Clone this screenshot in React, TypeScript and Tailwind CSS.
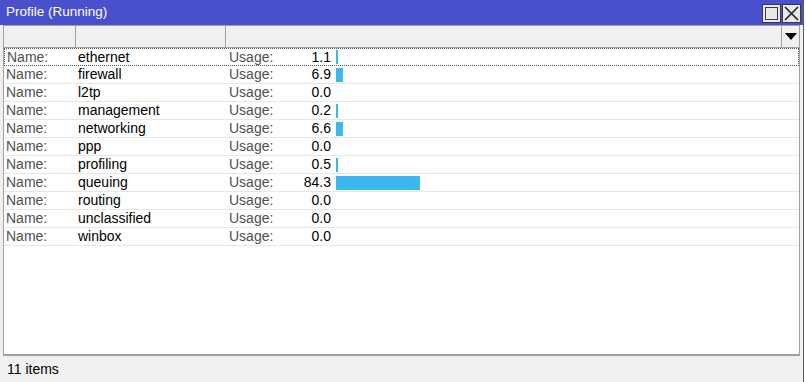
import React from "react";

const rows = [
  { name: "ethernet", usage: 1.1 },
  { name: "firewall", usage: 6.9 },
  { name: "l2tp", usage: 0.0 },
  { name: "management", usage: 0.2 },
  { name: "networking", usage: 6.6 },
  { name: "ppp", usage: 0.0 },
  { name: "profiling", usage: 0.5 },
  { name: "queuing", usage: 84.3 },
  { name: "routing", usage: 0.0 },
  { name: "unclassified", usage: 0.0 },
  { name: "winbox", usage: 0.0 },
];

const App = () => {
  return (
    <div
      className="w-[807px] h-[382px] bg-white overflow-hidden"
      style={{ fontFamily: '"Liberation Sans", Arial, sans-serif' }}
    >
      <div className="w-[804px] h-[382px] flex flex-col bg-[#f0f0f0] border-r border-[#5a5a5a]">
        <div className="h-[25px] bg-[#4a4fcc] flex items-center justify-between pl-[6px] pr-[2px]">
          <span className="text-white text-[13.5px]">Profile (Running)</span>
          <div className="flex gap-[1px] pt-[2px]">
            <div className="w-[19px] h-[19px] bg-[#e8e8e8] border border-[#3a3a3a] flex items-center justify-center">
              <div className="w-[13px] h-[13px] border-[1.5px] border-[#3a3a3a]" />
            </div>
            <div className="w-[19px] h-[19px] bg-[#e8e8e8] border border-[#3a3a3a] flex items-center justify-center">
              <svg width="15" height="15" viewBox="0 0 15 15">
                <path d="M1 1L14 14M14 1L1 14" stroke="#222" strokeWidth="1.6" />
              </svg>
            </div>
          </div>
        </div>
        <div className="flex-1 flex flex-col pl-[3px] pr-[3px]">
          <div className="flex-1 flex flex-col bg-white border-l border-t border-r border-[#a0a0a0] border-b-2 border-b-[#a0a0a0]">
            <div className="h-[22px] flex bg-[#f0f0f0] border-b border-[#a0a0a0]">
              <div className="w-[72px] border-r border-[#a0a0a0]" />
              <div className="w-[150px] border-r border-[#a0a0a0]" />
              <div className="flex-1 border-r border-[#a0a0a0]" />
              <div className="w-[17px] flex items-center justify-center">
                <svg width="12" height="7" viewBox="0 0 12 7">
                  <path d="M0 0H12L6 7Z" fill="#000" />
                </svg>
              </div>
            </div>
            {rows.map((r, i) => (
              <div
                key={r.name}
                className={
                  i === 0
                    ? "h-[18px] flex items-center text-[14px] border border-dotted border-[#555]"
                    : "h-[18px] flex items-center text-[14px] border-b border-[#e6e6e6]"
                }
              >
                <span className={i === 0 ? "w-[73px] pl-[2px] text-[#505050]" : "w-[74px] pl-[2px] text-[#505050]"}>Name:</span>
                <span className="w-[151px] text-black">{r.name}</span>
                <span className="w-[56px] text-[#505050]">Usage:</span>
                <span className="w-[46px] text-right text-black">{r.usage.toFixed(1)}</span>
                <div className="ml-[5px] h-[14px] flex items-center">
                  {r.usage > 0 && (
                    <div
                      className="h-[14px] bg-[#3bb9ec]"
                      style={{ width: Math.max(2, Math.round(r.usage)) }}
                    />
                  )}
                </div>
              </div>
            ))}
          </div>
        </div>
        <div className="h-[26px] flex items-center pl-[7px] text-[14px] text-black">11 items</div>
      </div>
    </div>
  );
};

export default App;
